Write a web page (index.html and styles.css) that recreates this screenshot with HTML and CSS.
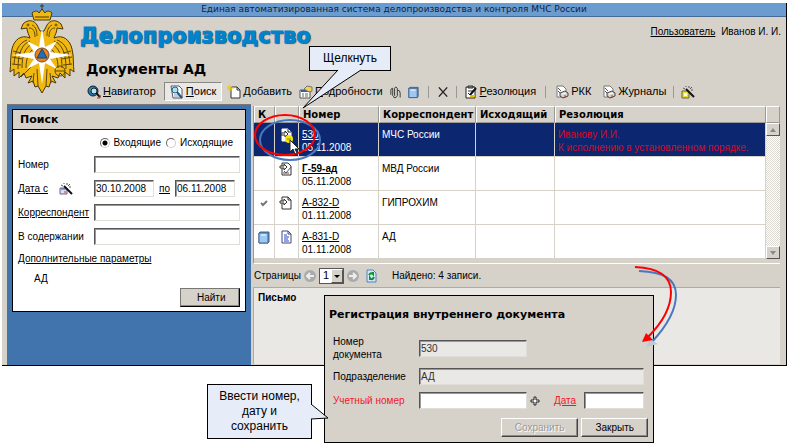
FILE: index.html
```html
<!DOCTYPE html>
<html lang="ru">
<head>
  <meta charset="UTF-8">
  <meta name="viewport" content="width=device-width, initial-scale=1.0">
  <title>Делопроизводство</title>
  <link rel="stylesheet" href="styles.css">
</head>
<body>

<!-- Shared icons -->
<svg class="defs" width="0" height="0">
  <symbol id="i-print" viewBox="0 0 14 14">
    <path d="M2 1h6l3 3v8H2z" fill="#fff" stroke="#777"/>
    <path d="M3 3l3 3M3 6l3 3" stroke="#555"/>
    <path d="M5 8l5-2 3 2v3l-5 2-3-2z" fill="#d8d4cc" stroke="#444"/>
    <path d="M7 9l4-1" stroke="#fff"/><path d="M9 11h2" stroke="#c33"/>
  </symbol>
  <symbol id="i-book" viewBox="0 0 14 14">
    <path d="M2 3l1-1h9v10l-1 1H2z" fill="#5d8cc4" stroke="#46648c"/>
    <path d="M2 3h9v10H2z" fill="#9cc8f4" stroke="#46648c"/>
    <path d="M4 5h5" stroke="#fff"/>
  </symbol>
  <symbol id="i-wand" viewBox="0 0 14 14">
    <path d="M5 4l8 8" stroke="#111" stroke-width="2"/>
    <path d="M5 1v1M8 1v2M11 2l-2 2M2 3l2 1M12 5h-2" stroke="#555"/>
  </symbol>
</svg>

<div class="app">
  <div class="banner">Единая автоматизированная система делопроизводства и контроля МЧС России</div>

  <!-- Emblem -->
  <svg class="emblem" viewBox="0 0 66 90" aria-label="МЧС России">
    <g fill="#f0b810" stroke="#4a3808" stroke-width="1">
      <path d="M28 22c-3-5-9-6-14-1l-2 5 6-1c0 4 2 7 3 10C12 31 5 37 3 46 1 54 2 62 1 69l4-3 0 7 5-4 0 6 5-5 2 5 6-2-4 7 5-2 2 6 3-1 4 7 4-7 3 1 2-6 5 2-4-7 6 2 2-5 5 5 0-6 5 4 0-7 4 3c-1-7 0-15-2-23-2-9-9-15-18-11 1-3 3-6 3-10l6 1-2-5c-5-5-11-4-14 1l-3 6h-4z"/>
      <path d="M25 17h16l2-7c-3-3-6-2-7 0l-3-4-3 4c-1-2-4-3-7 0z"/>
      <path d="M33 1v6M31 3h4M26 14h14"/>
    </g>
    <g fill="none" stroke="#60480a" stroke-width="1">
      <path d="M18 37C10 40 6 47 5 62M21 38c-8 3-12 12-12 28M23 41c-7 4-10 11-10 24M25 45c-5 4-8 10-8 20M48 37c8 3 12 10 13 25M45 38c8 3 12 12 12 28M43 41c7 4 10 11 10 24M41 45c5 4 8 10 8 20"/>
      <path d="M4 48l8 2M3 54l10 2M3 61l9 1M54 50l8-2M53 56l10-2M54 62l9-1M28 66l1 17M38 66l-1 17M25 70l-1 10M41 70l1 10M20 25c4 0 6 3 6 9M46 25c-4 0-6 3-6 9M23 22c4 2 5 6 5 11M43 22c-4 2-5 6-5 11"/>
      <circle cx="19" cy="22" r="1"/><circle cx="47" cy="22" r="1"/>
      <circle cx="51" cy="68" r="5"/>
      <path d="M46 68h10M12 74l10-10"/>
    </g>
    <path d="M33 25l3 19 12-6-7 11 22 3-22 4 7 10-12-6-3 21-3-21-12 6 7-10-22-4 22-3-7-11 12 6z" fill="#fff"/>
    <circle cx="33" cy="52" r="7" fill="#f08010" stroke="#705030"/>
    <path d="M33 46l5 9H28z" fill="#2070b8" stroke="#184880"/>
  </svg>

  <header class="header">
    <div class="title-row">
      <h1>Делопроизводство</h1>
      <div class="user"><a href="#">Пользователь</a> <span>Иванов И. И.</span></div>
    </div>
    <h2>Документы АД</h2>
    <nav class="toolbar">
      <button class="tool">
        <svg viewBox="0 0 14 14"><circle cx="6" cy="6" r="5" fill="#2870b8" stroke="#124"/><path d="M2 4l4-2 3 2-3 3-3-1M6 9l4-1v2z" fill="#38b050"/><circle cx="7" cy="6" r="3" fill="#bde" stroke="#123"/><path d="M9 8l4 4" stroke="#111" stroke-width="2"/><path d="M10 13h3v-3" stroke="#c22" fill="none"/></svg>
        <span><u>Н</u>авигатор</span></button>
      <button class="tool active">
        <svg viewBox="0 0 14 14"><path d="M1 1h8l3 3v9H3z" fill="#fff" stroke="#557"/><path d="M4 10h6M4 12h6" stroke="#999"/><circle cx="5" cy="5" r="3" fill="#a8e0f0" stroke="#268"/><path d="M7 7l5 6" stroke="#258" stroke-width="2"/></svg>
        <span><u>П</u>оиск</span></button>
      <button class="tool">
        <svg viewBox="0 0 14 14"><path d="M4 2h6l3 3v8H4z" fill="#fff" stroke="#333"/><path d="M10 2v3h3" fill="none" stroke="#333"/><path d="M3 0v7M0 3h7M1 1l4 4M5 1L1 5" stroke="#e8c800"/></svg>
        <span><u>Д</u>обавить</span></button>
      <button class="tool">
        <svg viewBox="0 0 14 14"><path d="M1 5h10v8H1z" fill="#fff" stroke="#555"/><path d="M2 6h8" stroke="#2860b0" stroke-width="2"/><path d="M3 9h2M3 11h2M6 9h3M6 11h3" stroke="#666"/><path d="M5 4l3-3 5 1v4l-3 1z" fill="#f0d060" stroke="#775"/></svg>
        <span><u>П</u>одробности</span></button>
      <button class="tool icon-only" aria-label="Вложения">
        <svg viewBox="0 0 14 14"><path d="M2 10V5q0-2 2-2v8q1 2 2 0V3q1-3 3 0v8q-1 3-4 2M9 5q3 0 3 3v5" fill="none" stroke="#333"/></svg></button>
      <button class="tool icon-only" aria-label="Книга"><svg><use href="#i-book"/></svg></button>
      <i class="sep wide"></i>
      <button class="tool icon-only" aria-label="Удалить">
        <svg viewBox="0 0 14 14"><path d="M2 2l9 10M11 2L2 12" stroke="#222" stroke-width="1.5"/></svg></button>
      <i class="sep"></i>
      <button class="tool">
        <svg viewBox="0 0 14 14"><path d="M2 2h9v11H2z" fill="#fff" stroke="#222"/><path d="M4 1h5v2H4zM4 8l2 2M4 6h5" fill="#888" stroke="#333"/><path d="M6 10l6-7" stroke="#111" stroke-width="2"/><path d="M6 11h5" stroke="#e0c000" stroke-width="2"/></svg>
        <span><u>Р</u>езолюция</span></button>
      <i class="sep wide"></i>
      <button class="tool"><svg><use href="#i-print"/></svg><span>РКК</span></button>
      <button class="tool journals"><svg><use href="#i-print"/></svg><span>Журналы</span></button>
      <i class="sep"></i>
      <button class="tool" aria-label="Мастер">
        <svg viewBox="0 0 14 14"><path d="M1 6h7v7H1z" fill="#e8e020" stroke="#664"/><path d="M3 8h3v3H3z" fill="#fff"/><use href="#i-wand" width="14" height="14"/></svg></button>
    </nav>
  </header>

  <div class="main">
    <!-- Search -->
    <aside class="side">
      <form class="search" onsubmit="return false;">
        <h3>Поиск</h3>
        <div class="search-body">
          <div class="radios">
            <label><input type="radio" name="dir" checked> Входящие</label>
            <label><input type="radio" name="dir"> Исходящие</label>
          </div>
          <label for="num">Номер</label>
          <input class="field" type="text" id="num">
          <div class="date-label"><label for="from"><u>Дата с</u></label>
            <svg viewBox="0 0 14 14"><path d="M1 6h7v6H1z" fill="#dde" stroke="#668"/><path d="M2 7h5" stroke="#36a"/><path d="M5 10h2" stroke="#c33"/><use href="#i-wand" width="14" height="14"/></svg>
          </div>
          <div class="dates">
            <input class="field" type="text" id="from" value="30.10.2008">
            <label for="to"><u>по</u></label>
            <input class="field" type="text" id="to" value="06.11.2008">
          </div>
          <label for="corr"><u>Корреспондент</u></label>
          <input class="field" type="text" id="corr">
          <label for="text">В содержании</label>
          <input class="field" type="text" id="text">
          <div class="search-foot">
            <a href="#">Дополнительные параметры</a>
            <div class="dept">АД</div>
            <button class="btn find" type="submit">Найти</button>
          </div>
        </div>
      </form>
    </aside>

    <!-- Documents -->
    <section class="content">
      <div class="grid">
        <table class="docs">
          <colgroup><col class="c-k"><col class="c-icon"><col class="c-num"><col class="c-corr"><col class="c-out"><col></colgroup>
          <thead>
            <tr><th>К</th><th></th><th>Номер</th><th>Корреспондент</th><th>Исходящий</th><th>Резолюция</th></tr>
          </thead>
          <tbody>
            <tr class="selected">
              <td></td>
              <td><svg viewBox="0 0 14 14"><path d="M3 1h6l3 3v9H3z" fill="#fff" stroke="#fff"/><path d="M9 1v3h3M1 5h5v-2l3 3-3 3V7H1z" fill="none" stroke="#223"/></svg></td>
              <td><a href="#">530</a><br>05.11.2008</td>
              <td>МЧС России</td>
              <td></td>
              <td class="red">Иванову И.И.<br>К исполнению в установленном порядке.</td>
            </tr>
            <tr>
              <td></td>
              <td><svg viewBox="0 0 14 14"><path d="M3 1h6l3 3v9H3z" fill="#fff" stroke="#333"/><path d="M1 4h4V2l3 3-3 3V6H1z" fill="#fff" stroke="#333"/><path d="M5 9l2 2 5-6M4 11h6" fill="none" stroke="#555"/></svg></td>
              <td><a href="#"><b>Г-59-ад</b></a><br>05.11.2008</td>
              <td>МВД России</td>
              <td></td>
              <td></td>
            </tr>
            <tr>
              <td><svg viewBox="0 0 14 14"><path d="M4 7l2 2 4-4" fill="none" stroke="#777" stroke-width="2"/></svg></td>
              <td><svg viewBox="0 0 14 14"><path d="M3 1h6l3 3v9H3z" fill="#fff" stroke="#333"/><path d="M9 1v3h3" fill="none" stroke="#333"/><path d="M1 5h4V3l3 3-3 3V7H1z" fill="#fff" stroke="#333"/></svg></td>
              <td><a href="#">А-832-D</a><br>01.11.2008</td>
              <td>ГИПРОХИМ</td>
              <td></td>
              <td></td>
            </tr>
            <tr>
              <td><svg><use href="#i-book"/></svg></td>
              <td><svg viewBox="0 0 14 14"><path d="M3 1h6l3 3v9H3z" fill="#fff" stroke="#447"/><path d="M9 1v3h3" fill="none" stroke="#447"/><path d="M5 5h3M5 7h5M5 9h4M5 11h5" stroke="#24c"/></svg></td>
              <td><a href="#">А-831-D</a><br>01.11.2008</td>
              <td>АД</td>
              <td></td>
              <td></td>
            </tr>
          </tbody>
        </table>
        <div class="scroll">
          <div class="scroll-head"></div>
          <button aria-label="Вверх"><svg viewBox="0 0 8 8"><path d="M1 6l3-4 3 4z" fill="#888"/></svg></button>
          <div class="track"></div>
          <button aria-label="Вниз"><svg viewBox="0 0 8 8"><path d="M1 2l3 4 3-4z" fill="#888"/></svg></button>
        </div>
      </div>

      <div class="pager">
        <label for="page">Страницы</label>
        <svg viewBox="0 0 14 14"><circle cx="7" cy="7" r="6" fill="#aaa"/><path d="M11 7H4M7 4L4 7l3 3" fill="none" stroke="#eee" stroke-width="2"/></svg>
        <span class="select">
          <select id="page"><option>1</option></select>
          <svg viewBox="0 0 10 12"><path d="M2 5h6L5 8z" fill="#000"/></svg>
        </span>
        <svg viewBox="0 0 14 14"><circle cx="7" cy="7" r="6" fill="#aaa"/><path d="M3 7h7M7 4l3 3-3 3" fill="none" stroke="#eee" stroke-width="2"/></svg>
        <svg class="refresh" viewBox="0 0 14 14"><path d="M3 1h6l3 3v9H3z" fill="#d4e8fc" stroke="#5580b8"/><path d="M5 6q2-3 4-1V3M10 8q-2 4-4 1v2" fill="none" stroke="#109030" stroke-width="2"/></svg>
        <span class="found">Найдено: 4 записи.</span>
      </div>

      <div class="preview">Письмо</div>
    </section>
  </div>
</div>

<!-- Registration dialog -->
<form class="dialog" onsubmit="return false;">
  <h3>Регистрация внутреннего документа</h3>
  <div class="dialog-body">
    <label for="docnum">Номер<br>документа</label>
    <input class="field short" type="text" id="docnum" value="530" readonly>
    <label for="unit">Подразделение</label>
    <input class="field" type="text" id="unit" value="АД" readonly>
    <label class="required" for="reg">Учетный номер</label>
    <div class="reg-row">
      <input class="field reg" type="text" id="reg">
      <svg viewBox="0 0 10 10"><path d="M4 1h2v3h3v2H6v3H4V6H1V4h3z" fill="#fff" stroke="#222"/></svg>
      <label class="required" for="regdate"><u>Дата</u></label>
      <input class="field" type="text" id="regdate">
    </div>
  </div>
  <div class="actions">
    <button class="btn" disabled>Сохранить</button>
    <button class="btn">Закрыть</button>
  </div>
</form>

<!-- Callouts and arrows -->
<div class="callout callout-click">Щелкнуть</div>
<div class="callout callout-enter">Ввести номер, дату и сохранить</div>
<svg class="marks" width="788" height="443" viewBox="0 0 788 443">
  <path d="M338 70L303 108L361 70" fill="#e6edf8" stroke="#000"/>
  <path d="M311 404L328 418L311 419" fill="#e6edf8" stroke="#000"/>
  <g fill="none" stroke-width="2">
    <ellipse cx="290" cy="140" rx="30" ry="20" stroke="#4878c0"/>
    <ellipse cx="285" cy="135" rx="30" ry="20" stroke="#f00"/>
    <path d="M639 271C664 272 676 279 676 295C676 312 663 330 652 342" stroke="#4878c0"/>
    <path d="M635 267C660 268 671 277 671 292C671 311 658 327 648 337" stroke="#f00"/>
  </g>
  <path d="M646 347l4-8 8 5z" fill="#c0c8d4"/>
  <path d="M642 342l4-9 7 7z" fill="#f00"/>
  <circle cx="289" cy="139" r="4" fill="#f4e400"/><path d="M287 139h4" stroke="#a08000"/>
  <path d="M290 140v12l3-3 2 5 2-1-2-4h4z" fill="#fff" stroke="#222"/>
</svg>

</body>
</html>
```

FILE: styles.css
```css
/* General Styles */
* {
  box-sizing: border-box;
}
body {
  font-family: "Liberation Sans", Arial, sans-serif;
  font-size: 10px;
  line-height: 13px;
  color: #000;
  background-color: #fff;
  margin: 0;
  padding: 3px 1px 0 2px;
  min-height: 100vh;
  position: relative;
}
h1, h2, h3 {
  font-family: "DejaVu Sans", Verdana, sans-serif;
  margin: 0;
}
a {
  color: inherit;
}
svg {
  width: 14px;
  height: 14px;
  flex: none;
}
button, input, select {
  font: inherit;
  color: inherit;
}
.defs {
  position: absolute;
  width: 0;
  height: 0;
}
.app {
  position: relative;
  background-color: #d6d2ca;
  border-right: 1px solid #000;
  border-bottom: 1px solid #000;
}
.banner {
  height: 14px;
  font-family: "DejaVu Sans", Verdana, sans-serif;
  font-size: 9px;
  line-height: 13px;
  text-align: center;
  color: #10243c;
  background-color: #6b9cd0;
  border-bottom: 1px solid #466a94;
}
.emblem {
  position: absolute;
  left: 7px;
  top: 0;
  width: 66px;
  height: 90px;
}

/* Header */
.header {
  padding: 7px 5px 3px 78px;
}
.title-row {
  display: flex;
  justify-content: space-between;
}
h1 {
  font-size: 21px;
  line-height: 25px;
  color: #0083cc;
  -webkit-text-stroke: 1px #0083cc;
  text-shadow: 1px 1px 1px #555;
}
h2 {
  font-size: 14px;
  line-height: 20px;
  margin: 10px 0 3px 6px;
}
.user {
  padding-top: 1px;
}
.user span {
  margin-left: 3px;
}

/* Toolbar */
.toolbar {
  display: flex;
  align-items: center;
  gap: 3px;
  font-size: 11px;
}
.tool {
  display: flex;
  align-items: center;
  gap: 2px;
  height: 19px;
  padding: 0 1px;
  border: 1px solid transparent;
  background: none;
  white-space: nowrap;
}
.tool:first-child {
  padding-left: 6px;
}
.active {
  margin-left: 3px;
  padding: 0 5px;
  background-color: #eae8e4;
  border-color: #888 #fff #fff #888;
}
.icon-only {
  padding: 0;
}
.icon-only svg {
  width: 13px;
}
.journals {
  margin-left: 4px;
}
.sep {
  width: 1px;
  height: 12px;
  margin: 0 2px;
  background-color: #999;
}
.wide {
  margin: 0 4px;
}

/* Search panel */
.main {
  display: flex;
  padding-left: 5px;
}
.side {
  flex: none;
  width: 244px;
  padding: 4px 5px;
  background-color: #4173ad;
  border-top: 1px solid #777;
}
.search {
  background-color: #fff;
  border: 1px solid #000;
}
.search h3 {
  font-size: 11px;
  line-height: 19px;
  padding-left: 7px;
  background-color: #d6d2ca;
  border-bottom: 1px solid #000;
}
.search-body {
  display: grid;
  grid-template-columns: 76px 1fr;
  row-gap: 7px;
  align-items: center;
  padding: 6px 5px 4px;
}
.radios {
  grid-column: 1 / 3;
  display: flex;
  justify-content: flex-end;
  gap: 5px;
  padding-right: 7px;
}
.radios label {
  display: flex;
  align-items: center;
  gap: 4px;
}
.radios input {
  appearance: none;
  width: 10px;
  height: 10px;
  margin: 0;
  border: 1px solid #999;
  border-color: #666 #ccc #ccc #666;
  border-radius: 50%;
}
.radios input:checked {
  background: radial-gradient(circle, #000 2px, #fff 3px);
}
.field {
  width: 100%;
  min-width: 0;
  height: 17px;
  padding: 0 1px;
  background-color: #fff;
  border: 1px solid;
  border-color: #555 #e0ded8 #e0ded8 #555;
  box-shadow: inset 1px 1px 0 #999;
  border-radius: 0;
}
.field:read-only {
  background-color: #e9e8e4;
  color: #333;
}
.date-label {
  display: flex;
  gap: 11px;
}
.dates {
  display: flex;
  align-items: center;
  justify-content: space-between;
  padding-right: 5px;
}
.dates .field {
  width: 60px;
}
.search-foot {
  grid-column: 1 / 3;
  display: flex;
  flex-direction: column;
}
.dept {
  padding: 7px 16px 3px;
}
.btn {
  height: 19px;
  padding: 0 16px;
  background-color: #d6d2ca;
  border: 1px solid;
  border-color: #fff #444 #444 #fff;
  box-shadow: inset -1px -1px 0 #888;
}
.btn:disabled {
  color: #999;
  text-shadow: 1px 1px 0 #fff;
}
.find {
  align-self: flex-end;
  width: 60px;
  border-color: #777 #000 #000 #777;
}

/* Document list */
.content {
  flex: 1;
  min-width: 0;
  padding: 2px 6px 1px 2px;
}
.grid {
  display: flex;
  padding-bottom: 4px;
  border-bottom: 1px solid #fff;
  border-left: 1px solid #999;
}
.docs {
  flex: 1;
  width: 100%;
  min-width: 0;
  table-layout: fixed;
  border-collapse: separate;
  border-spacing: 0;
}
.c-k { width: 21px; }
.c-icon { width: 24px; }
.c-num { width: 80px; }
.c-corr { width: 97px; }
.c-out { width: 79px; }
.docs th {
  height: 17px;
  padding: 0 3px;
  font-family: "DejaVu Sans", Verdana, sans-serif;
  font-size: 10px;
  text-align: left;
  white-space: nowrap;
  border: 1px solid;
  border-color: #fff #999 #999 #fff;
}
.docs td {
  height: 34px;
  padding: 5px 3px 2px;
  vertical-align: top;
  white-space: nowrap;
  background-color: #fff;
  border-right: 1px solid #d6d2ca;
  border-bottom: 1px solid #d6d2ca;
}
.docs svg {
  display: block;
}
.docs td:nth-child(2) {
  padding-left: 4px;
}
.docs .selected td {
  color: #fff;
  background-color: #0c2670;
}
.docs .selected .red {
  color: #d40c24;
}
.scroll {
  flex: none;
  width: 14px;
  display: flex;
  flex-direction: column;
}
.scroll-head {
  height: 17px;
  border: 1px solid;
  border-color: #fff #999 #999 #fff;
}
.scroll button {
  height: 13px;
  padding: 0;
  display: flex;
  align-items: center;
  justify-content: center;
  background-color: #d6d2ca;
  border: 1px solid;
  border-color: #fff #555 #555 #fff;
}
.scroll svg {
  width: 8px;
  height: 8px;
}
.track {
  flex: 1;
  background: repeating-conic-gradient(#fff 0 25%, #dcd9d2 0 50%) 0 0 / 2px 2px;
}

/* Pages */
.pager {
  display: flex;
  align-items: center;
  gap: 2px;
  height: 23px;
  padding-left: 1px;
}
.select {
  position: relative;
  display: flex;
}
.select select {
  appearance: none;
  width: 25px;
  height: 16px;
  padding: 0 3px;
  font-size: 11px;
  background-color: #fff;
  border: 1px solid #555;
  border-radius: 0;
}
.select svg {
  position: absolute;
  right: 1px;
  top: 1px;
  width: 12px;
  background-color: #d6d2ca;
  border: 1px solid;
  border-color: #fff #555 #555 #fff;
}
.refresh {
  margin-left: 2px;
}
.found {
  margin-left: 12px;
}
.preview {
  height: 77px;
  padding: 3px 4px;
  font-weight: bold;
  background-color: #e9e8e4;
  border-top: 1px solid #aaa;
  border-left: 1px solid #aaa;
}

/* Registration dialog */
.dialog {
  position: absolute;
  left: 324px;
  top: 295px;
  width: 330px;
  padding: 10px 9px 5px 4px;
  background-color: #d6d2ca;
  border: 1px solid #000;
}
.dialog h3 {
  font-size: 11px;
  line-height: 17px;
}
.dialog-body {
  display: grid;
  grid-template-columns: 86px 1fr;
  row-gap: 7px;
  align-items: center;
  padding: 12px 0 9px 4px;
}
.short {
  width: 108px;
}
.reg-row {
  display: flex;
  align-items: center;
}
.reg-row .reg {
  width: 108px;
}
.reg-row .field {
  flex: none;
}
.reg-row svg {
  width: 10px;
  height: 10px;
  margin: 0 14px 0 3px;
}
.reg-row label {
  flex: 1;
}
.reg-row #regdate {
  width: 60px;
}
.required {
  color: #f01828;
}
.actions {
  display: flex;
  justify-content: flex-end;
  gap: 3px;
  margin-right: -4px;
}
.actions .btn {
  padding: 0 13px;
}

/* Callouts */
.callout {
  position: absolute;
  text-align: center;
  background-color: #e6edf8;
  border: 1px solid #000;
}
.callout-click {
  left: 309px;
  top: 46px;
  width: 82px;
  padding: 3px 0;
  font-size: 12px;
  line-height: 17px;
}
.callout-enter {
  left: 207px;
  top: 384px;
  width: 105px;
  padding: 4px 6px;
  font-size: 12px;
  line-height: 15px;
}
.marks {
  position: absolute;
  left: 0;
  top: 0;
  width: 788px;
  height: 443px;
  pointer-events: none;
}
```
